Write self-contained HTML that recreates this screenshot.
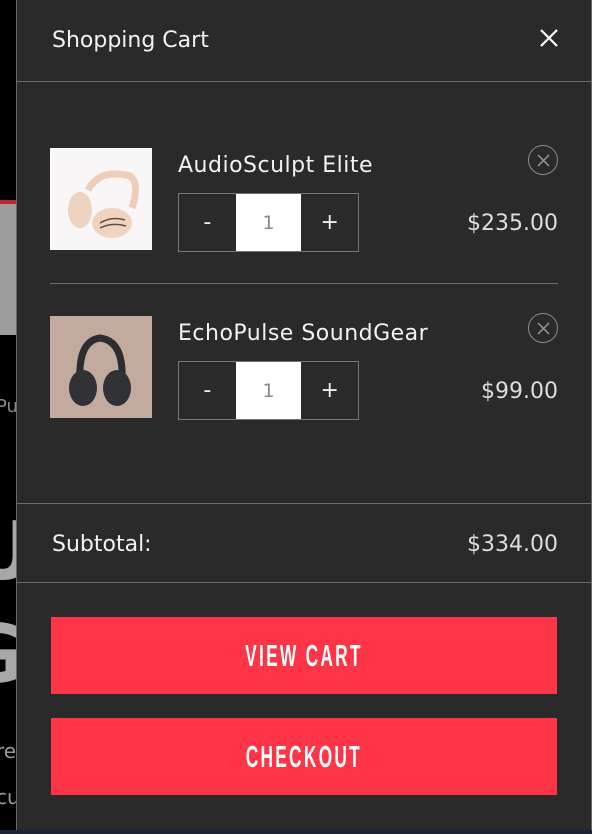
<!DOCTYPE html>
<html><head><meta charset="utf-8"><style>
*{margin:0;padding:0;box-sizing:border-box}
html,body{width:592px;height:834px;overflow:hidden}
body{background:#000;position:relative;font-family:"DejaVu Sans","Liberation Sans",sans-serif}
.abs{position:absolute}
.clip{position:absolute;left:0;top:0;width:16px;height:834px;overflow:hidden}
.panel{left:16px;top:0;width:576px;height:830px;background:#2a2a2a;border-left:1px solid #6a6a6a;border-right:1px solid #6a6a6a}
.hl{position:absolute;height:1px;background:#6b6b6b}
.t{position:absolute;color:#f2f2f2;white-space:nowrap}
.pr{position:absolute;right:34px;color:#ddd;font-size:22px;white-space:nowrap}
.qty{position:absolute;left:178px;width:181px;height:59px;border:1px solid #777;display:flex}
.qty div{display:flex;align-items:center;justify-content:center;color:#eee;font-size:22px}
.qty .m,.qty .p{width:57px}
.qty .v{width:66px;background:#fff;color:#888;font-size:19px}
.btn{position:absolute;left:51px;width:506px;height:77px;background:#fd3546;display:flex;align-items:center;justify-content:center}
.btn span{color:#fff;font-family:"Liberation Sans",sans-serif;font-weight:bold;font-size:31px;letter-spacing:4px;transform:scaleX(0.56);display:inline-block}
.rm{position:absolute;left:528px;width:30px;height:30px;border:1.5px solid #8a8a8a;border-radius:50%}
</style></head><body>
<div class="clip">
<div class="abs" style="left:0;top:200px;width:16px;height:4px;background:#c0272d"></div>
<div class="abs" style="left:0;top:204px;width:16px;height:131px;background:#9e9e9e"></div>
<div class="t" style="left:-4px;top:396px;color:#888;font-size:18px">Pu</div>
<div class="t" style="left:-30px;top:505px;color:#a8a8a8;font-size:80px;font-weight:bold">U</div>
<div class="t" style="left:-40px;top:608px;color:#a8a8a8;font-size:80px;font-weight:bold">G</div>
<div class="t" style="left:-4px;top:739px;color:#999;font-size:20px">re</div>
<div class="t" style="left:-4px;top:785px;color:#999;font-size:20px">cu</div>
</div>
<div class="abs" style="left:0;top:830px;width:592px;height:4px;background:#1c2533"></div>
<div class="abs panel"></div>
<div class="t" style="left:52px;top:28px;font-size:22px">Shopping Cart</div>
<svg class="abs" style="left:539px;top:28px" width="20" height="20"><path d="M2 2L18 18M18 2L2 18" stroke="#fff" stroke-width="2.2"/></svg>
<div class="hl" style="left:17px;top:81px;width:574px"></div>

<svg class="abs" style="left:50px;top:148px" width="102" height="102">
<rect width="102" height="102" fill="#f8f6f6"/>
<path d="M38 42 Q50 20 80 28 Q90 35 82 60" stroke="#f0cdb8" stroke-width="7" fill="none"/>
<ellipse cx="30" cy="62" rx="12" ry="18" fill="#eed4c0"/>
<ellipse cx="62" cy="75" rx="20" ry="15" fill="#efd5c1"/>
<path d="M50 75 Q62 68 75 72M50 80 Q62 74 76 78" stroke="#6b4a3a" stroke-width="1.5" fill="none"/>
</svg>
<div class="t" style="left:178px;top:153px;font-size:22px;letter-spacing:0.5px">AudioSculpt Elite</div>
<div class="rm" style="top:145px"></div>
<svg class="abs" style="left:536px;top:153px" width="15" height="15"><path d="M2 2L13 13M13 2L2 13" stroke="#999" stroke-width="1.5"/></svg>
<div class="qty" style="top:193px"><div class="m">-</div><div class="v">1</div><div class="p">+</div></div>
<div class="pr" style="top:211px">$235.00</div>
<div class="hl" style="left:50px;top:283px;width:508px"></div>

<svg class="abs" style="left:50px;top:316px" width="102" height="102">
<rect width="102" height="102" fill="#c3aa9f"/>
<path d="M30 65 Q28 25 50 22 Q74 25 72 65" stroke="#2b2d31" stroke-width="7" fill="none"/>
<ellipse cx="33" cy="72" rx="14" ry="18" fill="#303236"/>
<ellipse cx="67" cy="72" rx="14" ry="18" fill="#303236"/>
</svg>
<div class="t" style="left:178px;top:321px;font-size:22px;letter-spacing:0.5px">EchoPulse SoundGear</div>
<div class="rm" style="top:313px"></div>
<svg class="abs" style="left:536px;top:321px" width="15" height="15"><path d="M2 2L13 13M13 2L2 13" stroke="#999" stroke-width="1.5"/></svg>
<div class="qty" style="top:361px"><div class="m">-</div><div class="v">1</div><div class="p">+</div></div>
<div class="pr" style="top:379px">$99.00</div>

<div class="hl" style="left:17px;top:503px;width:574px"></div>
<div class="t" style="left:52px;top:532px;font-size:22px">Subtotal:</div>
<div class="pr" style="top:532px">$334.00</div>
<div class="hl" style="left:17px;top:582px;width:574px"></div>

<div class="btn" style="top:617px"><span>VIEW CART</span></div>
<div class="btn" style="top:718px"><span>CHECKOUT</span></div>
</body></html>
